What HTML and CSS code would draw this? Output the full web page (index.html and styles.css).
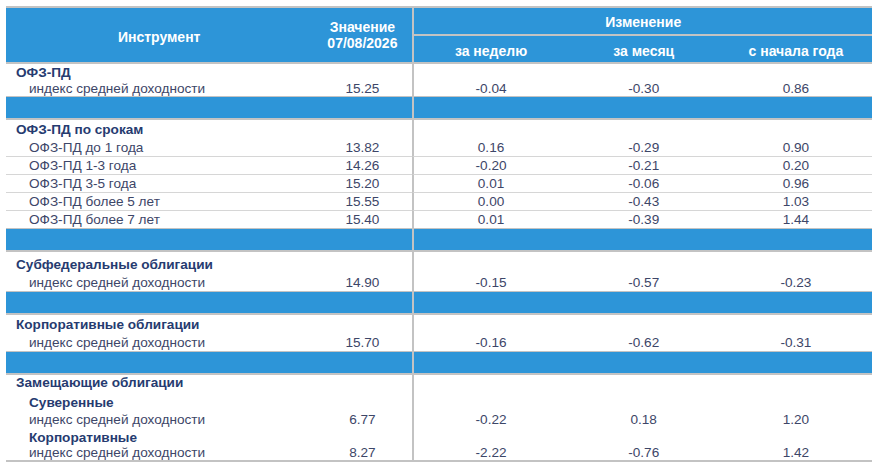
FILE: index.html
```html
<!DOCTYPE html>
<html lang="ru">
<head>
<meta charset="utf-8">
<title>Индексы доходности</title>
<link rel="stylesheet" href="styles.css">
</head>
<body>
<table class="yt">
  <colgroup>
    <col class="c-name">
    <col class="c-val">
    <col class="c-ch1">
    <col class="c-ch">
    <col class="c-ch">
  </colgroup>
  <thead>
    <tr class="h1">
      <th rowspan="2" class="h-name">Инструмент</th>
      <th rowspan="2" class="h-val">Значение<br>07/08/2026</th>
      <th colspan="3" class="h-group dv">Изменение</th>
    </tr>
    <tr class="h2">
      <th class="dv">за неделю</th>
      <th>за месяц</th>
      <th>с начала года</th>
    </tr>
  </thead>
  <tbody>
    <tr class="r16"><td class="ttl">ОФЗ-ПД</td><td></td><td class="dv"></td><td></td><td></td></tr>
    <tr class="r16"><td class="sub">индекс средней доходности</td><td>15.25</td><td class="dv">-0.04</td><td>-0.30</td><td>0.86</td></tr>

    <tr class="sep"><td></td><td></td><td class="dv"></td><td></td><td></td></tr>

    <tr class="r18"><td class="ttl">ОФЗ-ПД по срокам</td><td></td><td class="dv"></td><td></td><td></td></tr>
    <tr class="r18"><td class="sub">ОФЗ-ПД до 1 года</td><td>13.82</td><td class="dv">0.16</td><td>-0.29</td><td>0.90</td></tr>
    <tr class="r18 ln"><td class="sub">ОФЗ-ПД 1-3 года</td><td>14.26</td><td class="dv">-0.20</td><td>-0.21</td><td>0.20</td></tr>
    <tr class="r18 ln"><td class="sub">ОФЗ-ПД 3-5 года</td><td>15.20</td><td class="dv">0.01</td><td>-0.06</td><td>0.96</td></tr>
    <tr class="r18 ln"><td class="sub">ОФЗ-ПД более 5 лет</td><td>15.55</td><td class="dv">0.00</td><td>-0.43</td><td>1.03</td></tr>
    <tr class="r18 ln"><td class="sub">ОФЗ-ПД более 7 лет</td><td>15.40</td><td class="dv">0.01</td><td>-0.39</td><td>1.44</td></tr>

    <tr class="sep"><td></td><td></td><td class="dv"></td><td></td><td></td></tr>

    <tr class="r22p"><td class="ttl">Субфедеральные облигации</td><td></td><td class="dv"></td><td></td><td></td></tr>
    <tr class="r17"><td class="sub">индекс средней доходности</td><td>14.90</td><td class="dv">-0.15</td><td>-0.57</td><td>-0.23</td></tr>

    <tr class="sep"><td></td><td></td><td class="dv"></td><td></td><td></td></tr>

    <tr class="r19"><td class="ttl">Корпоративные облигации</td><td></td><td class="dv"></td><td></td><td></td></tr>
    <tr class="r17"><td class="sub">индекс средней доходности</td><td>15.70</td><td class="dv">-0.16</td><td>-0.62</td><td>-0.31</td></tr>

    <tr class="sep"><td></td><td></td><td class="dv"></td><td></td><td></td></tr>

    <tr class="r14"><td class="ttl">Замещающие облигации</td><td></td><td class="dv"></td><td></td><td></td></tr>
    <tr class="r20p"><td class="sub ttl2">Суверенные</td><td></td><td class="dv"></td><td></td><td></td></tr>
    <tr class="r19"><td class="sub">индекс средней доходности</td><td>6.77</td><td class="dv">-0.22</td><td>0.18</td><td>1.20</td></tr>
    <tr class="r16"><td class="sub ttl2">Корпоративные</td><td></td><td class="dv"></td><td></td><td></td></tr>
    <tr class="r15 last"><td class="sub">индекс средней доходности</td><td>8.27</td><td class="dv">-2.22</td><td>-0.76</td><td>1.42</td></tr>
  </tbody>
</table>
</body>
</html>
```

FILE: styles.css
```css
html, body {
  margin: 0;
  padding: 0;
  background: #ffffff;
}

body {
  padding: 6px 0 0 6px;
  font-family: "Liberation Sans", Arial, sans-serif;
  font-size: 13.6px;
  line-height: 15px;
  color: #3d4668;
}

.yt {
  width: 866px;
  table-layout: fixed;
  border-collapse: separate;
  border-spacing: 0;
  border-top: 2px solid #c3c3c3;
}

.c-name { width: 306px; }
.c-val { width: 100px; }
.c-ch1 { width: 155px; }
.c-ch { width: 152px; }

th {
  background: #2d95d8;
  color: #ffffff;
  font-size: 14px;
  font-weight: bold;
  text-align: center;
  vertical-align: middle;
  padding: 0;
  border-bottom: 2px solid #c3c3c3;
  line-height: 16px;
}

.h1 { height: 28px; }
.h1 .h-group { padding-top: 1px; }
.h2 { height: 28px; }
.h2 th { padding-top: 3px; }
.h-name { padding-top: 3px; }

.dv { border-left: 2px solid #c3c3c3; }

td {
  padding: 0;
  text-align: center;
  vertical-align: middle;
  white-space: nowrap;
}

td.ttl {
  text-align: left;
  padding-left: 10px;
  font-weight: bold;
  color: #263b70;
}

td.sub {
  text-align: left;
  padding-left: 23px;
}

td.ttl2 {
  font-weight: bold;
  color: #263b70;
}

.r14 { height: 14px; }
.r15 { height: 15px; }
.r16 { height: 16px; }
.r17 { height: 17px; }
.r18 { height: 18px; }
.r19 { height: 19px; }
.r22p { height: 22px; }
.r22p td { padding-top: 2px; }
.r20p { height: 20px; }
.r20p td { padding-top: 4px; }

.ln td { border-top: 1px solid #d6d6d6; }

.sep { height: 24px; }
.sep td {
  background: #2d95d8;
  border-top: 1px solid #c3c3c3;
  border-bottom: 2px solid #c3c3c3;
}

.last td { border-bottom: 2px solid #c3c3c3; }
```
